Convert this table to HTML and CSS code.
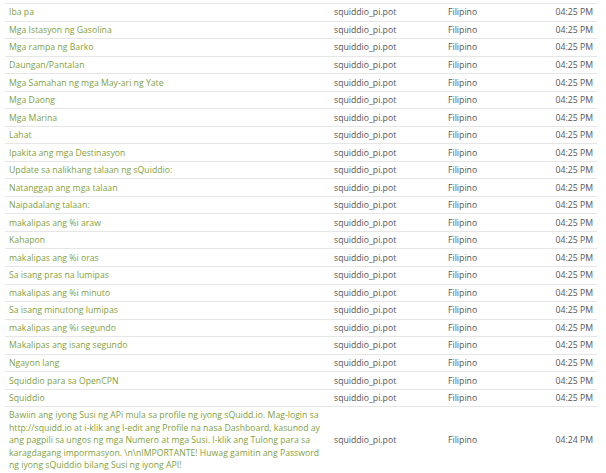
FILE: index.html
```html
<!DOCTYPE html>
<html lang="fil">
<head>
    <meta charset="UTF-8">
    <meta name="viewport" content="width=device-width, initial-scale=1.0">
    <title>Mga String ng Pagsasalin</title>
    <link rel="stylesheet" href="styles.css">
</head>
<body>
    <table class="strings">
        <tbody>
            <tr><td class="src"><a href="#">Iba pa</a></td><td>squiddio_pi.pot</td><td>Filipino</td><td class="time">04:25 PM</td></tr>
            <tr><td class="src"><a href="#">Mga Istasyon ng Gasolina</a></td><td>squiddio_pi.pot</td><td>Filipino</td><td class="time">04:25 PM</td></tr>
            <tr><td class="src"><a href="#">Mga rampa ng Barko</a></td><td>squiddio_pi.pot</td><td>Filipino</td><td class="time">04:25 PM</td></tr>
            <tr><td class="src"><a href="#">Daungan/Pantalan</a></td><td>squiddio_pi.pot</td><td>Filipino</td><td class="time">04:25 PM</td></tr>
            <tr><td class="src"><a href="#">Mga Samahan ng mga May-ari ng Yate</a></td><td>squiddio_pi.pot</td><td>Filipino</td><td class="time">04:25 PM</td></tr>
            <tr><td class="src"><a href="#">Mga Daong</a></td><td>squiddio_pi.pot</td><td>Filipino</td><td class="time">04:25 PM</td></tr>
            <tr><td class="src"><a href="#">Mga Marina</a></td><td>squiddio_pi.pot</td><td>Filipino</td><td class="time">04:25 PM</td></tr>
            <tr><td class="src"><a href="#">Lahat</a></td><td>squiddio_pi.pot</td><td>Filipino</td><td class="time">04:25 PM</td></tr>
            <tr><td class="src"><a href="#">Ipakita ang mga Destinasyon</a></td><td>squiddio_pi.pot</td><td>Filipino</td><td class="time">04:25 PM</td></tr>
            <tr><td class="src"><a href="#">Update sa nalikhang talaan ng sQuiddio:</a></td><td>squiddio_pi.pot</td><td>Filipino</td><td class="time">04:25 PM</td></tr>
            <tr><td class="src"><a href="#">Natanggap ang mga talaan</a></td><td>squiddio_pi.pot</td><td>Filipino</td><td class="time">04:25 PM</td></tr>
            <tr><td class="src"><a href="#">Naipadalang talaan:</a></td><td>squiddio_pi.pot</td><td>Filipino</td><td class="time">04:25 PM</td></tr>
            <tr><td class="src"><a href="#">makalipas ang %i araw</a></td><td>squiddio_pi.pot</td><td>Filipino</td><td class="time">04:25 PM</td></tr>
            <tr><td class="src"><a href="#">Kahapon</a></td><td>squiddio_pi.pot</td><td>Filipino</td><td class="time">04:25 PM</td></tr>
            <tr><td class="src"><a href="#">makalipas ang %i oras</a></td><td>squiddio_pi.pot</td><td>Filipino</td><td class="time">04:25 PM</td></tr>
            <tr><td class="src"><a href="#">Sa isang pras na lumipas</a></td><td>squiddio_pi.pot</td><td>Filipino</td><td class="time">04:25 PM</td></tr>
            <tr><td class="src"><a href="#">makalipas ang %i minuto</a></td><td>squiddio_pi.pot</td><td>Filipino</td><td class="time">04:25 PM</td></tr>
            <tr><td class="src"><a href="#">Sa isang minutong lumipas</a></td><td>squiddio_pi.pot</td><td>Filipino</td><td class="time">04:25 PM</td></tr>
            <tr><td class="src"><a href="#">makalipas ang %i segundo</a></td><td>squiddio_pi.pot</td><td>Filipino</td><td class="time">04:25 PM</td></tr>
            <tr><td class="src"><a href="#">Makalipas ang isang segundo</a></td><td>squiddio_pi.pot</td><td>Filipino</td><td class="time">04:25 PM</td></tr>
            <tr><td class="src"><a href="#">Ngayon lang</a></td><td>squiddio_pi.pot</td><td>Filipino</td><td class="time">04:25 PM</td></tr>
            <tr><td class="src"><a href="#">Squiddio para sa OpenCPN</a></td><td>squiddio_pi.pot</td><td>Filipino</td><td class="time">04:25 PM</td></tr>
            <tr><td class="src"><a href="#">Squiddio</a></td><td>squiddio_pi.pot</td><td>Filipino</td><td class="time">04:25 PM</td></tr>
            <tr class="last"><td class="src"><a href="#">Bawiin ang iyong Susi ng APi mula sa profile ng iyong sQuidd.io. Mag-login sa http://squidd.io at i-klik ang I-edit ang Profile na nasa Dashboard, kasunod ay ang pagpili sa ungos ng mga Numero at mga Susi. I-klik ang Tulong para sa karagdagang impormasyon. \n\nIMPORTANTE! Huwag gamitin ang Password ng iyong sQuiddio bilang Susi ng iyong API!</a></td><td>squiddio_pi.pot</td><td>Filipino</td><td class="time">04:24 PM</td></tr>
        </tbody>
    </table>
</body>
</html>
```

FILE: styles.css
```css
body {
    font-family: 'Open Sans', sans-serif;
    font-size: 8.7px;
    color: #555;
    background-color: #ffffff;
    margin: 0;
    padding: 3px 9px 0 5px;
}
.strings {
    width: 592px;
    border-collapse: collapse;
    table-layout: fixed;
}
.strings td {
    border-top: 1px solid #e6e6e6;
    padding: 2.4px 4px 1.45px;
    vertical-align: middle;
    line-height: 12.7px;
    white-space: nowrap;
}
.strings td:nth-child(1) {
    width: 317px;
    white-space: normal;
}
.strings td:nth-child(2) {
    width: 106px;
}
.strings td:nth-child(3) {
    width: 70px;
}
.strings .time {
    text-align: right;
}
.strings .src a {
    color: #7f9f3f;
    text-decoration: none;
}
.strings .last td {
    padding-top: 2px;
    line-height: 12.5px;
}
```
